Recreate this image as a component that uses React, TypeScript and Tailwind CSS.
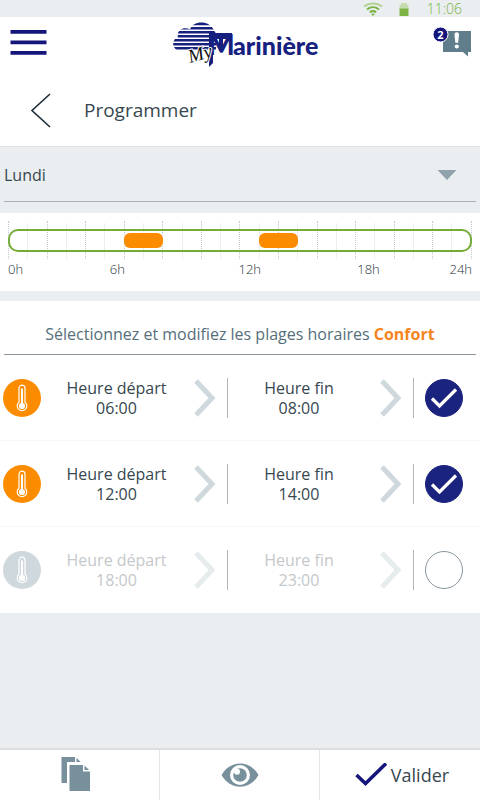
import { useState } from 'react';

type Slot = {
  id: number;
  start: string;
  end: string;
  enabled: boolean;
};

const DAYS = [
  'Lundi',
  'Mardi',
  'Mercredi',
  'Jeudi',
  'Vendredi',
  'Samedi',
  'Dimanche',
];

const HOURS = Array.from({ length: 25 }, (_, i) => i);

const COMFORT_RANGES = [
  { from: 6, to: 8 },
  { from: 13, to: 15 },
];

function StatusBar() {
  return (
    <div className="flex h-[17px] items-center justify-end bg-[#eaeef1] pr-[18px] text-sm leading-4 font-light text-[#7cb342]">
      <svg viewBox="0 0 20 14" className="mr-4 h-[14px] w-5" fill="none">
        <g strokeWidth="2">
          <path d="M1 4.600C6 .4 14 .4 19 4.600" stroke="#b5d296" />
          <path d="M4 7.500c3.600-2.900 8.400-2.900 12 0" stroke="#7cb342" />
          <path d="M6.800 10.300c2-1.500 4.400-1.500 6.400 0" stroke="#7cb342" />
        </g>
        <path d="M8 12c1.300-.8 2.700-.8 4 0l-2 2z" fill="#7cb342" />
      </svg>
      <svg viewBox="0 0 10 14" className="mr-[18px] h-[14px] w-[10px]">
        <path d="M2 1h6v2h1.500v4H.5V3H2z" fill="#c5dcae" />
        <path d="M.5 6.500h9V14h-9z" fill="#7cb342" />
      </svg>
      <span>11:06</span>
    </div>
  );
}

function Logo() {
  return (
    <svg
      viewBox="0 0 146 48"
      className="h-12 w-[146px] shrink-0"
      role="img"
      aria-label="My Marinière"
    >
      <defs>
        <clipPath id="cloud">
          <path d="M9 30C-2 30-2 18 5 16.500 3 9 11 5 17 8.500 20-1 37-1 41 9.500l2 3v17.500z" />
        </clipPath>
      </defs>
      <g clipPath="url(#cloud)" fill="#16207f">
        <path d="M0 1h46v3.200H0zM0 6h46v2.600H0zM0 10h46v2.600H0zM0 14h46v2.600H0zM0 18h46v2.600H0zM0 22h46v2.600H0zM0 26h46v2.600H0z" />
      </g>
      <path d="M36 12h23v6H36z" fill="#16207f" />
      <path d="M36 12h4v30l-4 4z" fill="#16207f" />
      <path d="M46 16h4v14h-4z" fill="#16207f" />
      <text
        x="35"
        y="34"
        fill="#16207f"
        className="font-['Lato'] text-[28px] font-black"
      >
        M
      </text>
      <text
        x="60"
        y="34"
        fill="#16207f"
        className="font-['Lato'] text-[25px] font-black"
      >
        arinière
      </text>
      <text
        x="17"
        y="42"
        fill="#111"
        stroke="#fff"
        strokeWidth="2"
        paintOrder="stroke"
        transform="rotate(-16 17 42)"
        className="font-['Liberation_Serif'] text-[19px] italic"
      >
        My
      </text>
    </svg>
  );
}

function Header() {
  return (
    <header className="bg-white">
      <div className="grid h-[54px] grid-cols-3 items-center px-[9px] pb-1">
        <button aria-label="Menu" className="w-[38px]">
          <svg viewBox="0 0 38 26" className="h-[26px] w-[38px]">
            <path
              d="M1.500 0h36v3.800h-36zM1.500 10.500h36v3.800h-36zM1.500 21h36v3.800h-36z"
              fill="#14167c"
            />
          </svg>
        </button>
        <div className="flex justify-center pt-1 pl-3">
          <Logo />
        </div>
        <button aria-label="Messages" className="justify-self-end">
          <svg viewBox="0 0 38 32" className="h-8 w-[38px]">
            <path d="M10 4h28v21h-3v4.500L30 25H10z" fill="#607d8b" />
            <path
              d="M21.500 7.500c0-3 4.500-3 4.500 0l-.8 8.300h-2.900z"
              fill="#fff"
            />
            <circle cx="23.750" cy="19.500" r="2.100" fill="#fff" />
            <circle cx="7.500" cy="7.500" r="7.500" fill="#14167c" stroke="#fff" />
            <text
              x="7.500"
              y="11.500"
              fill="#fff"
              textAnchor="middle"
              className="text-[11px] font-bold"
            >
              2
            </text>
          </svg>
        </button>
      </div>
      <div className="flex h-[75px] items-center pt-1 pl-[30px]">
        <button aria-label="Retour">
          <svg viewBox="0 0 22 36" className="h-9 w-[22px]" fill="none">
            <path d="M20 1 2 17.500 20 34" stroke="#1c2b36" strokeWidth="1.600" />
          </svg>
        </button>
        <h1 className="ml-8 text-[19px] text-[#37474f]">Programmer</h1>
      </div>
    </header>
  );
}

function DaySelect() {
  const [day, setDay] = useState('Lundi');

  return (
    <div className="border-t border-[#dde2e5] px-1 pb-[11px]">
      <div className="relative border-b border-[#a9b1bb]">
        <select
          aria-label="Jour"
          value={day}
          onChange={(e) => setDay(e.target.value)}
          className="h-[54px] w-full appearance-none bg-transparent pt-[2px] text-base text-[#37474f] outline-none"
        >
          {DAYS.map((item) => (
            <option key={item}>{item}</option>
          ))}
        </select>
        <svg
          viewBox="0 0 20 10"
          className="pointer-events-none absolute top-[23px] right-[19px] h-[10px] w-5"
        >
          <path d="M.5 0h19L10 10z" fill="#8fa3ad" />
        </svg>
      </div>
    </div>
  );
}

function Timeline() {
  return (
    <section className="bg-white px-2 pt-2 pb-3">
      <div className="relative h-[38px]">
        <div className="flex h-full justify-between">
          {HOURS.map((hour) => (
            <span
              key={hour}
              className={
                hour % 2 === 0
                  ? 'w-0 border-l border-dotted border-[#c4c8cb]'
                  : 'mt-[2px] w-0 border-l border-[#eceeef]'
              }
            />
          ))}
        </div>
        <div className="absolute inset-x-0 top-2 h-[23px] rounded-[10px] border-2 border-[#74ac39]" />
        {COMFORT_RANGES.map(({ from, to }) => (
          <div
            key={from}
            className="absolute top-3 h-[15px] rounded-md bg-[#fb8c00]"
            style={{
              left: `${(from / 24) * 100}%`,
              width: `${((to - from) / 24) * 100}%`,
            }}
          />
        ))}
      </div>
      <div className="grid grid-cols-[102fr_129fr_119fr_115fr] text-[13px] leading-5 font-light text-[#263238]">
        <span>0h</span>
        <span>6h</span>
        <span>12h</span>
        <span className="flex justify-between">
          <span>18h</span>
          <span>24h</span>
        </span>
      </div>
    </section>
  );
}

function TimeButton({ label, time }: { label: string; time: string }) {
  return (
    <button className="flex h-10 flex-1 items-center justify-end border-r border-[#b0b8bd] pr-[11px] last:[&>svg]:ml-6">
      <span className="w-[114px] text-center text-base leading-5">
        {label}
        <br />
        {time}
      </span>
      <svg viewBox="0 0 22 38" className="ml-5 h-[38px] w-[22px]" fill="none">
        <path d="M2 2 18 19 2 36" stroke="#cfd8dc" strokeWidth="5" />
      </svg>
    </button>
  );
}

function SlotRow({ slot, onToggle }: { slot: Slot; onToggle: () => void }) {
  return (
    <li className="flex h-[86px] items-center border-b border-[#f6f7f8] pr-[17px] pl-[3px] last:border-b-0">
      <svg viewBox="0 0 38 38" className="h-[38px] w-[38px]" fill="none">
        <circle cx="19" cy="19" r="19" fill={slot.enabled ? '#fb8c00' : '#cfd8dc'} />
        <path
          d="M16 23.200V9.200a3 3 0 0 1 6 0v14a4.800 4.800 0 1 1-6 0z"
          stroke="#fff"
          strokeWidth="1.200"
        />
        <path d="M19 9.500v16" stroke="#fff" strokeWidth="2" />
        <circle cx="19" cy="27" r="3.100" fill="#fff" />
      </svg>
      <div
        className={
          slot.enabled
            ? 'flex flex-1 text-[#37474f]'
            : 'flex flex-1 text-[#c4c8cb] [&_svg]:opacity-50'
        }
      >
        <TimeButton label="Heure départ" time={slot.start} />
        <TimeButton label="Heure fin" time={slot.end} />
      </div>
      <label className="relative ml-[11px] block h-[38px] w-[38px]">
        <input
          type="checkbox"
          aria-label={`Plage ${slot.start} - ${slot.end}`}
          checked={slot.enabled}
          onChange={onToggle}
          className="block h-full w-full appearance-none rounded-full border border-[#8b969d] checked:border-[#1a237e] checked:bg-[#1a237e]"
        />
        {slot.enabled && (
          <svg
            viewBox="0 0 38 38"
            className="pointer-events-none absolute inset-0"
            fill="none"
          >
            <path d="m7 19.500 7.500 7.500L31 10.500" stroke="#fff" strokeWidth="3.200" />
          </svg>
        )}
      </label>
    </li>
  );
}

function Footer() {
  return (
    <footer className="mt-auto grid h-[52px] grid-cols-3 divide-x divide-[#e1e5e8] border-t-2 border-[#dcdfe1] bg-white">
      <button aria-label="Copier" className="flex items-center justify-center pr-2">
        <svg viewBox="0 0 30 36" className="h-9 w-[30px]" fill="#78909c">
          <path d="M.5 0h13.500v5H6v21H.5z" />
          <path d="M15.500.8v4.200h4.200z" />
          <path d="M8.500 8H22v6.500h7V34H8.500z" />
          <path d="M23.500 8.500V13H28z" />
        </svg>
      </button>
      <button aria-label="Afficher" className="flex items-center justify-center">
        <svg viewBox="0 0 38 26" className="h-[26px] w-[38px]">
          <path
            d="M.5 13C9-2.500 29-2.500 37.500 13 29 28.500 9 28.500.5 13z"
            fill="#78909c"
          />
          <circle cx="19" cy="13" r="10" fill="#fff" />
          <circle cx="19" cy="13" r="6.800" fill="#78909c" />
          <circle cx="16" cy="9.800" r="3" fill="#fff" />
        </svg>
      </button>
      <button className="flex items-center justify-center gap-1 pl-1 text-lg text-[#37474f]">
        <svg viewBox="0 0 32 24" className="h-6 w-8" fill="none">
          <path d="m1.500 12 9 8.500L31 .5" stroke="#14167c" strokeWidth="3.500" />
        </svg>
        Valider
      </button>
    </footer>
  );
}

export default function App() {
  const [slots, setSlots] = useState<Slot[]>([
    { id: 1, start: '06:00', end: '08:00', enabled: true },
    { id: 2, start: '12:00', end: '14:00', enabled: true },
    { id: 3, start: '18:00', end: '23:00', enabled: false },
  ]);

  const toggleSlot = (id: number) => {
    setSlots(
      slots.map((slot) =>
        slot.id === id ? { ...slot, enabled: !slot.enabled } : slot,
      ),
    );
  };

  return (
    <div className="flex min-h-screen flex-col bg-[#eaeef1] font-['Open_Sans','Noto_Sans',sans-serif]">
      <StatusBar />
      <Header />
      <DaySelect />
      <Timeline />

      <section className="mt-[10px] bg-white">
        <h2 className="mx-1 flex h-[54px] items-center justify-center border-b border-[#8b969d] pt-3 text-base text-[#546e7a]">
          <span>
            Sélectionnez et modifiez les plages horaires{' '}
            <strong className="font-bold text-[#f5851f]">Confort</strong>
          </span>
        </h2>
        <ul>
          {slots.map((slot) => (
            <SlotRow
              key={slot.id}
              slot={slot}
              onToggle={() => toggleSlot(slot.id)}
            />
          ))}
        </ul>
      </section>

      <Footer />
    </div>
  );
}
